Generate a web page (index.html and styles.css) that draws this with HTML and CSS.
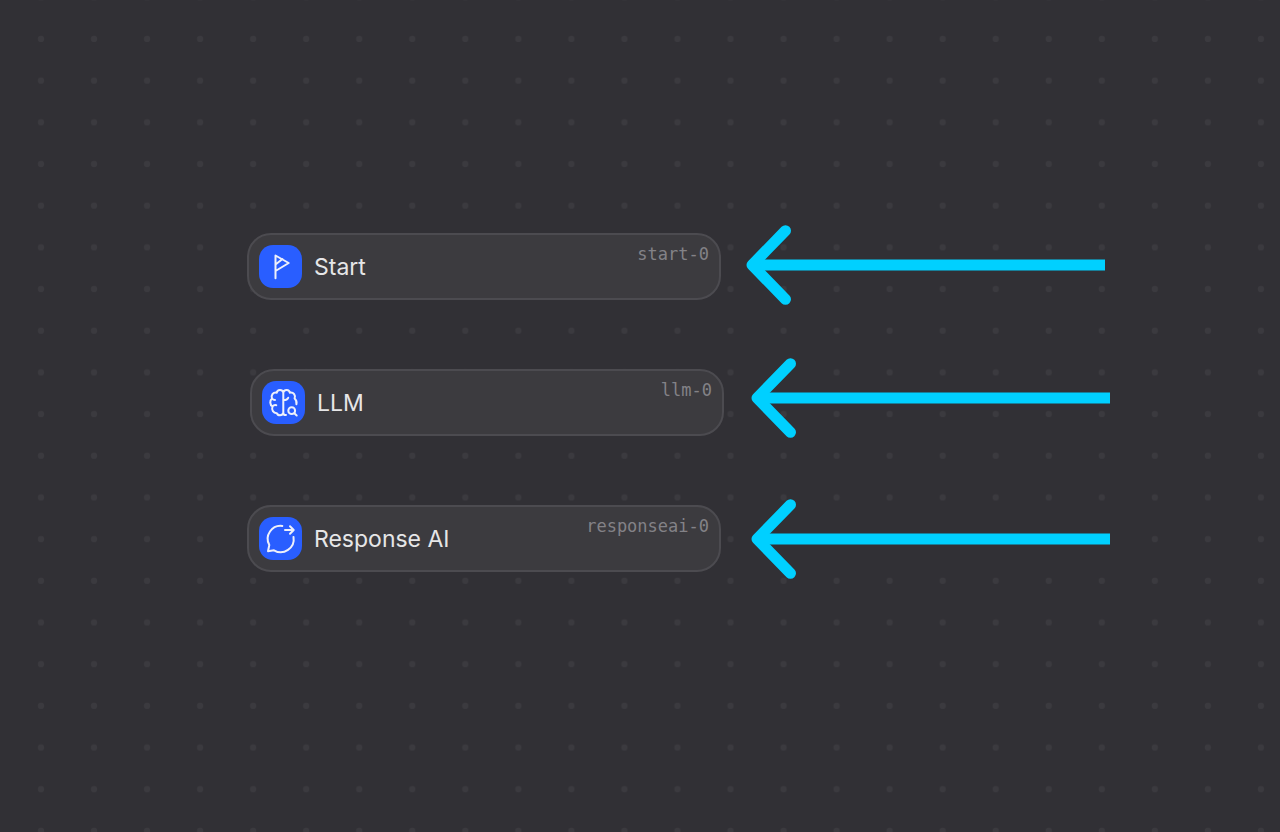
FILE: index.html
```html
<!DOCTYPE html>
<html lang="en">
<head>
<meta charset="utf-8">
<title>Flow canvas</title>
<link rel="stylesheet" href="styles.css">
</head>
<body>
<main class="canvas">
  <svg class="grid" aria-hidden="true">
    <defs>
      <pattern id="dots" x="14.5" y="18.2" width="53.04" height="41.68" patternUnits="userSpaceOnUse">
        <circle cx="26.5" cy="20.8" r="3.1" fill="#3b3a3f"/>
      </pattern>
      <symbol id="arrow" viewBox="0 0 359 80">
        <g fill="none" stroke="#00d0ff" stroke-width="11">
          <path d="M7 40h352"/>
          <path d="M39.5 5.700 6 40l33.500 34.300" stroke-linecap="round" stroke-linejoin="round"/>
        </g>
      </symbol>
    </defs>
    <rect width="100%" height="100%" fill="url(#dots)"/>
  </svg>

  <article class="node node-start">
    <span class="icon">
      <svg viewBox="0 0 43 43" aria-hidden="true"><path d="M16.500 33.200V10.500L29.700 18 16.500 26M16.500 19.500l7-5.500"/></svg>
    </span>
    <h2 class="title">Start</h2>
    <span class="tag">start-0</span>
  </article>
  <svg class="arrow arrow-start" aria-hidden="true"><use href="#arrow"/></svg>

  <article class="node node-llm">
    <span class="icon">
      <svg viewBox="0 0 43 43" aria-hidden="true"><path d="M21.300 11.500v20.500M21.300 11.500c-1-3.500-6-3.200-6.500.2-4-.6-6 2.600-4.800 5.800-2.400 2-2.300 6.300.5 8-1.200 3.500.8 6.500 4.300 6.700 1 2.900 5.500 3 6.500-.4.200 1.700 1.200 2.400 2.700 2.200M10.500 25.500c1-1.300 2.300-1.700 3.800-1.300M10 17.500c.8 1 1.800 1.500 3 1.500M21.300 11.500c1-3.500 6-3.200 6.500.2 4-.6 6 2.600 4.800 5.800 1.700 1.500 2.300 3.700 1.800 5.700M21.300 19.200c2.600 0 4.200-.6 4.900-2.400"/><circle cx="29.700" cy="29.700" r="3.400"/><path d="m32.300 32.300 2.400 2.200"/></svg>
    </span>
    <h2 class="title">LLM</h2>
    <span class="tag">llm-0</span>
  </article>
  <svg class="arrow arrow-llm" aria-hidden="true"><use href="#arrow"/></svg>

  <article class="node node-response">
    <span class="icon">
      <svg viewBox="0 0 43 43" aria-hidden="true"><path d="M23.300 8.900A13 13 0 0 0 10.300 28L9 34.200l6-.9A13 13 0 0 0 34.500 20M26 13h8M31 9.200l3.700 3.800L31 16.800"/></svg>
    </span>
    <h2 class="title">Response AI</h2>
    <span class="tag">responseai-0</span>
  </article>
  <svg class="arrow arrow-response" aria-hidden="true"><use href="#arrow"/></svg>
</main>
</body>
</html>
```
FILE: styles.css
```css
body {
  margin: 0;
  background: #313035;
  font-family: Inter, sans-serif;
}

.canvas {
  position: relative;
  min-height: 100vh;
  overflow: hidden;
}

.grid {
  position: absolute;
  inset: 0;
  width: 100%;
  height: 100%;
}

.node {
  position: absolute;
  box-sizing: border-box;
  width: 474px;
  display: flex;
  align-items: center;
  gap: 12px;
  padding: 10px;
  border: 2px solid #4c4b50;
  border-radius: 24px;
  background: #3c3b3f;
}

.node-start { left: 247px; top: 233px; }
.node-llm { left: 250px; top: 369px; }
.node-response { left: 247px; top: 505px; }

.icon {
  width: 43px;
  height: 43px;
  border-radius: 14px;
  background: #295eff;
}

.icon svg {
  display: block;
  fill: none;
  stroke: #eef0fa;
  stroke-width: 2;
  stroke-linecap: round;
  stroke-linejoin: round;
}

.title {
  margin: 0;
  color: #e6e6e7;
  font-size: 23px;
  font-weight: 400;
  line-height: 28px;
}

.tag {
  align-self: flex-start;
  margin-left: auto;
  color: #838287;
  font-family: "DejaVu Sans Mono", monospace;
  font-size: 17px;
  line-height: 18px;
}

.arrow {
  position: absolute;
  width: 359px;
  height: 80px;
}

.arrow-start { left: 746px; top: 225px; }
.arrow-llm { left: 751px; top: 358px; }
.arrow-response { left: 751px; top: 499px; }
```
